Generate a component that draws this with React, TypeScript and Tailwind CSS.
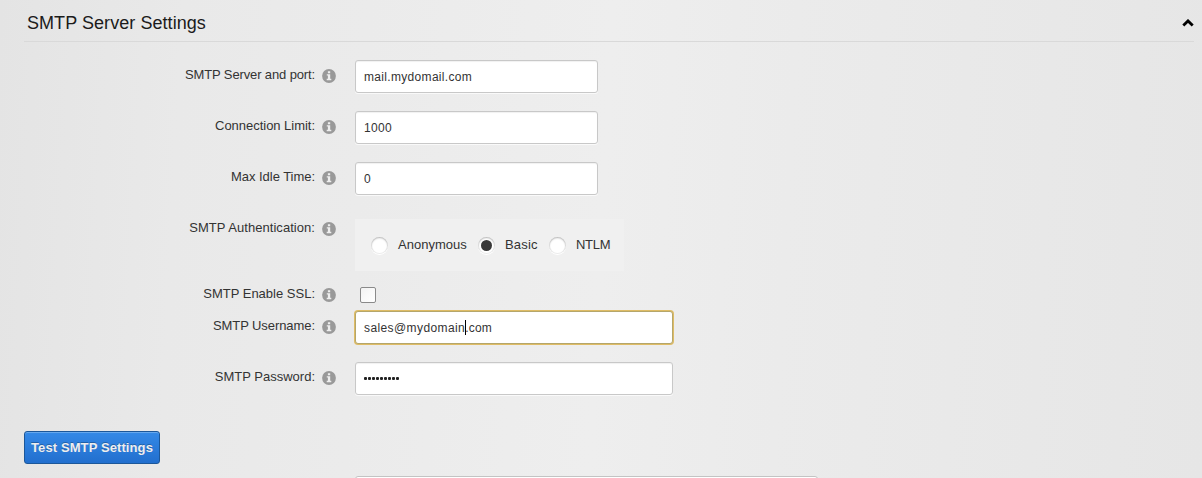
import React, { useState } from 'react';

const InfoIcon: React.FC = () => (
    <svg className="ml-[7px] mt-[8.5px] h-[14px] w-[14px] shrink-0" viewBox="0 0 14 14">
        <circle cx="7" cy="7" r="6.9" fill="#999999" />
        <path d="M5.9 2.3h2.3v1.9H5.9zM4.8 5.2h3.4v4.6h1.1v1.4H4.7V9.8h1.2V6.6H4.8z" fill="#eeeeee" />
    </svg>
);

interface RowProps {
    label: string;
    labelClass: string;
    className: string;
    children: React.ReactNode;
}

const Row: React.FC<RowProps> = ({ label, labelClass, className, children }) => (
    <div className={`flex items-start ${className}`}>
        <div className="flex w-[336px] shrink-0 justify-end">
            <span className={`mt-[5px] whitespace-nowrap text-[13px] leading-5 ${labelClass}`}>{label}</span>
            <InfoIcon />
        </div>
        <div className="ml-[19px]">{children}</div>
    </div>
);

const fieldClass =
    'block h-[33px] rounded-[3px] border border-[#c8c8c8] bg-white pl-2 text-[12px] leading-[31px] text-[#333] shadow-[inset_0_1px_1px_rgba(0,0,0,0.06),0_1px_0_rgba(255,255,255,0.7)] outline-none';

const authModes = [
    { name: 'Anonymous', gap: 'ml-4', width: 'w-[69px] tracking-[0.02px]' },
    { name: 'Basic', gap: 'ml-[11px]', width: 'w-[33px] tracking-[0.2px]' },
    { name: 'NTLM', gap: 'ml-[11px]', width: 'w-[35px] tracking-[-0.3px]' },
];

export default function App() {
    const [server, setServer] = useState('mail.mydomail.com');
    const [limit, setLimit] = useState('1000');
    const [idleTime, setIdleTime] = useState('0');
    const [auth, setAuth] = useState('Basic');
    const [ssl, setSsl] = useState(false);

    return (
        <div className="h-[478px] w-[1202px] overflow-hidden bg-[linear-gradient(93deg,#e4e4e4_0%,#e9e9e9_15%,#ebebeb_30%,#eeeeee_50%,#ebebeb_65%,#e6e6e6_100%)] font-['Liberation_Sans',Arial,sans-serif] text-[#333]">
            <header className="ml-6 mr-2 flex h-[42px] items-start justify-between border-b border-[#d9d9d9] pl-[3px]">
                <h2 className="mt-[11px] whitespace-nowrap text-[18px] leading-6 tracking-[0.06px] text-[#1b1b1b]">SMTP Server Settings</h2>
                <svg className="mt-[19px] h-[8px] w-[12px]" viewBox="0 0 12 8">
                    <path d="M1.3 6.5L6 1.9l4.7 4.6" fill="none" stroke="#000" strokeWidth="2.8" />
                </svg>
            </header>

            <main className="pt-[18px]">
                <Row label="SMTP Server and port:" labelClass="tracking-[-0.13px]" className="h-[51px]">
                    <input value={server} onChange={e => setServer(e.target.value)} className={`${fieldClass} w-[243px] tracking-[0.32px]`} />
                </Row>
                <Row label="Connection Limit:" labelClass="tracking-[-0.03px]" className="h-[51px]">
                    <input value={limit} onChange={e => setLimit(e.target.value)} className={`${fieldClass} w-[243px] tracking-[0.3px]`} />
                </Row>
                <Row label="Max Idle Time:" labelClass="tracking-[-0.04px]" className="h-[51px]">
                    <input value={idleTime} onChange={e => setIdleTime(e.target.value)} className={`${fieldClass} w-[243px]`} />
                </Row>

                <Row label="SMTP Authentication:" labelClass="tracking-[0.05px]" className="h-[66px]">
                    <div className="mt-[6px] flex h-[52px] w-[269px] items-center bg-[#f0f0f0] pl-4">
                        {authModes.map((mode, i) => (
                            <label key={mode.name} className={`flex items-center ${i > 0 ? mode.gap : ''}`}>
                                <input type="radio" name="auth" className="sr-only" checked={auth === mode.name} onChange={() => setAuth(mode.name)} />
                                <span className="mt-px flex h-[17px] w-[17px] items-center justify-center rounded-full bg-white shadow-[inset_0_0_0_1px_rgba(0,0,0,0.06),inset_0_1px_2px_rgba(0,0,0,0.24),0_1px_0_#fff]">
                                    {auth === mode.name && <span className="h-[11px] w-[11px] rounded-full bg-[#393939]" />}
                                </span>
                                <span className={`ml-[10px] text-[13px] leading-5 ${mode.width}`}>{mode.name}</span>
                            </label>
                        ))}
                    </div>
                </Row>

                <Row label="SMTP Enable SSL:" labelClass="tracking-[0px]" className="h-[32px]">
                    <input
                        type="checkbox"
                        checked={ssl}
                        onChange={e => setSsl(e.target.checked)}
                        className="ml-[5px] mt-2 block h-4 w-4 appearance-none rounded-[2px] border border-[#8a8a8a] bg-white bg-linear-to-br from-[#f3f3f3] to-white checked:bg-[#393939]"
                    />
                </Row>

                <Row label="SMTP Username:" labelClass="tracking-[-0.07px]" className="h-[51px]">
                    <div className="flex h-[33px] w-[318px] items-center rounded-[3px] border border-[#b5a66b] bg-white pl-2 text-[12px] leading-[31px] tracking-[0.4px] shadow-[0_0_0_1px_#dfbc65]">
                        <span className="pt-px">sales@mydomain</span>
                        <span className="-mr-px h-[15px] w-px bg-black" />
                        <span className="pt-px tracking-[0.2px]">.com</span>
                    </div>
                </Row>
                <Row label="SMTP Password:" labelClass="tracking-[0px]" className="h-[69px]">
                    <div className={`${fieldClass} flex w-[318px] items-center gap-px`}>
                        {Array.from({ length: 9 }, (_, i) => (
                            <span key={i} className="h-[3px] w-[3px] rounded-[1px] bg-[#222]" />
                        ))}
                    </div>
                </Row>

                <button className="ml-6 block h-[33px] w-[136px] whitespace-nowrap rounded-[3px] border border-[#1c5799] bg-linear-to-b from-[#3489e7] to-[#226fce] text-[13px] font-bold leading-[31px] tracking-[0.1px] text-[#eeeeee] shadow-[inset_0_1px_0_#66a8ee] [text-shadow:0_-1px_0_rgba(0,0,0,0.25)]">
                    Test SMTP Settings
                </button>
                <div className="ml-[355px] mt-3 h-[33px] w-[463px] rounded-[3px] border border-[#c3c3c3] bg-white" />
            </main>
        </div>
    );
}
